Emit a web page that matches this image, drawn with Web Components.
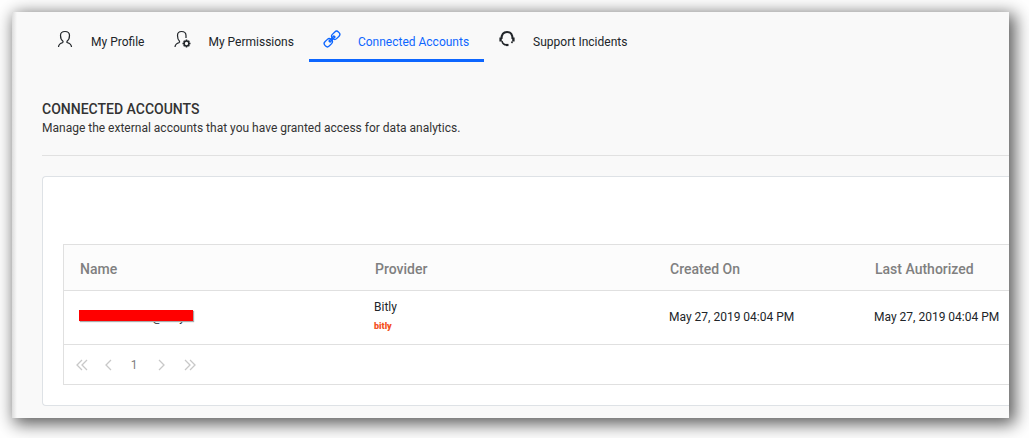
<!DOCTYPE html>
<html lang="en">
<head>
<meta charset="utf-8">
<title>Connected Accounts</title>
<style>
  body { margin: 0; background: #fff; font-family: Roboto, "Liberation Sans", sans-serif; font-size: 12px; line-height: 18px; color: #212529; overflow: hidden; }
</style>
</head>
<body>
<app-window>
  <profile-tabs>
    <profile-tab icon="user">My Profile</profile-tab>
    <profile-tab icon="permissions">My Permissions</profile-tab>
    <profile-tab icon="link" active>Connected Accounts</profile-tab>
    <profile-tab icon="support">Support Incidents</profile-tab>
  </profile-tabs>
  <section-heading>
    <span slot="title">CONNECTED ACCOUNTS</span>
    <span slot="description">Manage the external accounts that you have granted access for data analytics.</span>
  </section-heading>
  <content-card>
    <accounts-table></accounts-table>
    <page-navigator></page-navigator>
  </content-card>
</app-window>

<script>
const define = (name, html, setup) => customElements.define(name, class extends HTMLElement {
  constructor() {
    super();
    const template = document.createElement('template');
    template.innerHTML = html;
    this.attachShadow({ mode: 'open' }).append(template.content.cloneNode(true));
  }
  connectedCallback() { if (setup) setup(this, this.shadowRoot); }
});

const icons = {
  user: '<path d="M6 12.500V11.200C4.500 10.200 3.500 8.200 3.500 5.500C3.500 2.500 5.300 1.500 8 1.500S12.500 2.500 12.500 5.500C12.500 8.200 11.500 10.200 10 11.200V12.500C12.500 13.200 14.500 14 14.500 17M6 12.500C3.500 13.200 1.500 14 1.500 17"/>',
  permissions: '<path d="M5.500 12.500V11.200C4.300 10.200 3.500 8.200 3.500 5.500C3.500 2.500 5.200 1.500 7.500 1.500S12 2.500 12 5.500V8M5.500 12.500C3 13.200 1 14 1 17"/><circle cx="12.500" cy="13.500" r="2.400" stroke-width="1.500"/><path d="M12.500 9.500v1.500M12.500 16v1.500M8.500 13.500H10M15 13.500h1.500M9.700 10.700l1 1M14.300 15.300l1 1M15.300 10.700l-1 1M10.700 15.300l-1 1" stroke-width="1.500"/>',
  link: '<g transform="rotate(-45 8 9)" stroke-width="1.300"><rect x="-1.500" y="6" width="8.500" height="6" rx="2.500"/><rect x="9" y="6" width="8.500" height="6" rx="2.500"/><path d="M4.500 8.200h7v1.600h-7z"/></g>',
  support: '<path d="M2.500 9C2.500 4.500 4.500 2 8 2S13.500 4.500 13.500 9" stroke-width="2"/><path d="M1.600 7.500v4M14.400 7.500v4" stroke-width="2.400"/><path d="M3 11C3.500 13.500 5 14.800 7.500 15" stroke-width="1.500"/><path d="M7 15h2.500" stroke-width="2.200"/><path d="M13.500 11.500l-1 1.500" stroke-width="1.500"/>'
};

define('app-window', `
  <style>
    :host { display: block; box-sizing: border-box; margin: 12px 20px 20px 12px; padding: 0 0 12px 30px; overflow: hidden; background: linear-gradient(90deg, #dcdcdc, #f9f9f9 5px); box-shadow: 4px 4px 16px 2px rgba(0,0,0,.65); }
  </style><slot></slot>`);

define('profile-tabs', `
  <style>
    :host { display: block; }
    nav { display: flex; }
  </style><nav aria-label="Profile"><slot></slot></nav>`);

define('profile-tab', `
  <style>
    :host { display: block; }
    a { display: flex; align-items: center; gap: 18px; box-sizing: border-box; height: 50px; padding: 12px 15px 0; border-bottom: 3px solid transparent; color: #212529; text-decoration: none; white-space: nowrap; }
    :host([active]) a { color: #0d66ff; border-color: #0d66ff; }
    svg { width: 16px; height: 18px; margin-bottom: 6px; fill: none; stroke: currentColor; stroke-width: 1.2; overflow: visible; }
  </style><a href="#"><svg viewBox="0 0 16 18" aria-hidden="true"></svg><span><slot></slot></span></a>`,
  (host, root) => {
    root.querySelector('svg').innerHTML = icons[host.getAttribute('icon')];
    if (host.hasAttribute('active')) root.querySelector('a').setAttribute('aria-current', 'page');
  });

define('section-heading', `
  <style>
    :host { display: block; padding: 37px 0 18px; border-bottom: 1px solid #e1e1e1; }
    h1 { margin: 0; font-size: 14px; line-height: 20px; font-weight: 500; color: #333; }
    p { margin: 0; color: #333; }
  </style><h1><slot name="title"></slot></h1><p><slot name="description"></slot></p>`);

define('content-card', `
  <style>
    :host { display: block; margin-top: 20px; padding: 67px 0 20px 20px; background: #fff; border: 1px solid #dee2e6; border-right: 0; border-radius: 4px 0 0 4px; }
  </style><slot></slot>`);

define('redacted-text', `
  <style>
    :host { display: block; position: relative; padding-left: 73px; }
    i { position: absolute; left: 0; top: 2px; width: 114px; height: 11px; background: #f00; box-shadow: 1px 1px 1px #aaa; }
  </style><slot></slot><i></i>`);

define('accounts-table', `
  <style>
    :host { display: block; border: 1px solid #e0e0e0; border-right: 0; }
    table { width: 100%; table-layout: fixed; border-collapse: separate; border-spacing: 0; }
    th, td { box-sizing: border-box; padding: 0 0 2px 15px; text-align: left; white-space: nowrap; }
    th { height: 46px; padding: 3px 0 0 16px; background: #fcfcfc; color: #808080; font-size: 14px; font-weight: 500; border-bottom: 1px solid #e0e0e0; }
    td { height: 53px; }
    .wide { width: 295px; }
    .date { width: 205px; }
    .logo { display: block; color: #f4511e; font: 900 9px/20px Roboto, sans-serif; }
  </style>
  <table>
    <thead><tr><th class="wide">Name</th><th class="wide">Provider</th><th class="date">Created On</th><th>Last Authorized</th></tr></thead>
    <tbody><tr>
      <td><redacted-text>@bitly</redacted-text></td>
      <td>Bitly<span class="logo">bitly</span></td>
      <td>May 27, 2019 04:04 PM</td>
      <td>May 27, 2019 04:04 PM</td>
    </tr></tbody>
  </table>`);

define('page-navigator', `
  <style>
    :host { display: block; border: solid #e0e0e0; border-width: 0 0 1px 1px; }
    nav { display: flex; align-items: center; height: 39px; padding-left: 4px; }
    button { display: grid; place-items: center; width: 27px; height: 27px; padding: 0; border: 0; background: none; color: #808080; font: 12px/18px Roboto, sans-serif; }
    [aria-current] { width: 24px; }
    [aria-current] + button { width: 30px; }
    svg { width: 12px; height: 12px; fill: none; stroke: #c8c8c8; stroke-width: 1.3; }
  </style>
  <nav aria-label="Pages">
    <button aria-label="First page"><svg viewBox="0 0 12 12"><path d="M6 1L1 6l5 5M11 1L6 6l5 5"/></svg></button>
    <button aria-label="Previous page"><svg viewBox="0 0 12 12"><path d="M8 1L3 6l5 5"/></svg></button>
    <button aria-current="page">1</button>
    <button aria-label="Next page"><svg viewBox="0 0 12 12"><path d="M4 1l5 5-5 5"/></svg></button>
    <button aria-label="Last page"><svg viewBox="0 0 12 12"><path d="M1 1l5 5-5 5M6 1l5 5-5 5"/></svg></button>
  </nav>`);
</script>
</body>
</html>
